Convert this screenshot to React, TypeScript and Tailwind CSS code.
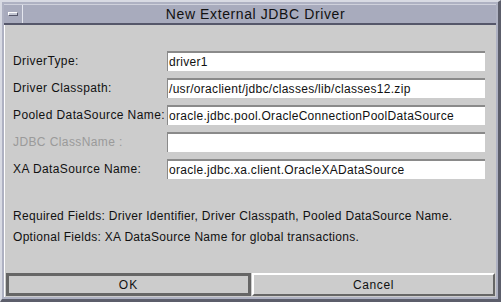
const fields = [
  { label: "DriverType:", value: "driver1" },
  { label: "Driver Classpath:", value: "/usr/oraclient/jdbc/classes/lib/classes12.zip" },
  { label: "Pooled DataSource Name:", value: "oracle.jdbc.pool.OracleConnectionPoolDataSource" },
  { label: "JDBC ClassName :", value: "", disabled: true },
  { label: "XA DataSource Name:", value: "oracle.jdbc.xa.client.OracleXADataSource" },
];

export default function App() {
  return (
    <div
      className="w-[501px] h-[302px] bg-[#aeb1c2] border-t-2 border-l-2 border-t-[#d8dae3] border-l-[#d8dae3] border-r-[3px] border-b-[3px] border-r-[#5c5e6b] border-b-[#5c5e6b] flex flex-col p-[2px] text-black"
      style={{ fontFamily: '"Liberation Sans", Arial, sans-serif' }}
    >
      {/* title bar */}
      <div className="h-[21px] shrink-0 flex bg-[#a8abbd] border-b-2 border-b-[#55576a] border-t border-t-[#cfd1dc]">
        <div className="w-[19px] flex items-center justify-center border-r border-r-[#e4e6ee]">
          <div className="w-[10px] h-[4px] bg-[#c3c6d3] border border-t-white border-l-white border-r-[#55576a] border-b-[#55576a]" />
        </div>
        <div className="flex-1 flex items-center justify-center text-[14px] tracking-[0.6px] text-[#111] pr-[8px]">
          New External JDBC Driver
        </div>
      </div>

      {/* content */}
      <div className="flex-1 bg-[#cccccc] flex flex-col text-[12px] tracking-[0.4px] border-l border-l-white">
        <div className="flex flex-col gap-[7px] pt-[26px] pl-[8px] pr-[11px]">
          {fields.map((f) => (
            <div key={f.label} className="flex items-center h-[20px]">
              <div
                className={`w-[154px] shrink-0 whitespace-nowrap ${f.disabled ? "text-[#9a9a9a]" : "text-[#111]"}`}
              >
                {f.label}
              </div>
              <div className="flex-1 h-[20px] bg-white border-t-2 border-l border-t-[#8a8a8a] border-l-[#8a8a8a] flex items-center pl-[1px] tracking-[0.3px] text-[#111] whitespace-nowrap">
                {f.value}
              </div>
            </div>
          ))}
        </div>

        <div className="pl-[8px] pt-[29px] flex flex-col gap-[5px] text-[#111] tracking-[0.3px]">
          <div className="h-[16px] leading-[16px]">Required Fields: Driver Identifier, Driver Classpath, Pooled DataSource Name.</div>
          <div className="h-[16px] leading-[16px]">Optional Fields: XA DataSource Name for global transactions.</div>
        </div>

        <div className="mt-auto flex gap-[1px] px-[1px] pb-[1px]">
          <button
            type="button"
            className="flex-1 h-[23px] bg-[#cccccc] border-[3px] border-[#666666] text-[12px] tracking-[1px] text-[#111]"
          >
            OK
          </button>
          <button
            type="button"
            className="flex-1 h-[23px] bg-[#cccccc] border-2 border-t-white border-l-white border-r-[#666666] border-b-[#666666] text-[12px] tracking-[0.6px] text-[#111]"
          >
            Cancel
          </button>
        </div>
      </div>
    </div>
  );
}
